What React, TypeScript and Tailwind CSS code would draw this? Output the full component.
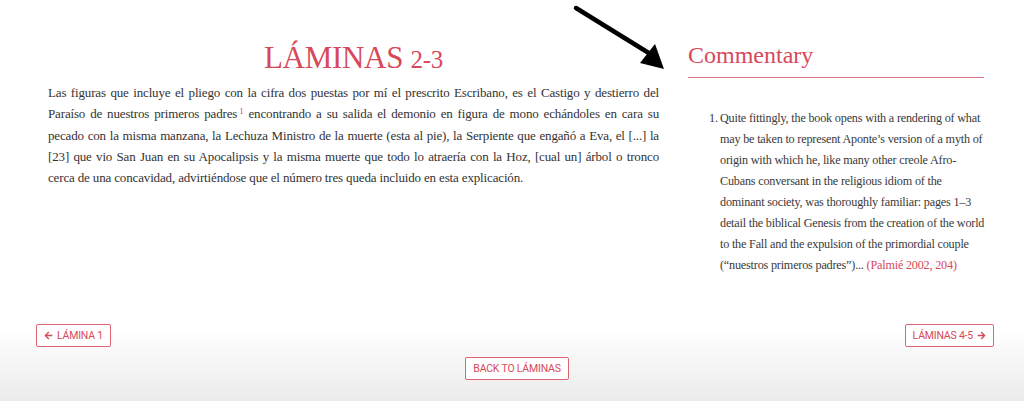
import { FaArrowLeft, FaArrowRight } from "react-icons/fa";

const MAIN_LINES = [
    "Las figuras que incluye el pliego con la cifra dos puestas por mí el prescrito Escribano, es el Castigo y destierro del",
    "Paraíso de nuestros primeros padres|1| encontrando a su salida el demonio en figura de mono echándoles en cara su",
    "pecado con la misma manzana, la Lechuza Ministro de la muerte (esta al pie), la Serpiente que engañó a Eva, el [...] la",
    "[23] que vio San Juan en su Apocalipsis y la misma muerte que todo lo atraería con la Hoz, [cual un] árbol o tronco",
];
const MAIN_LAST = "cerca de una concavidad, advirtiéndose que el número tres queda incluido en esta explicación.";

const NOTE_LINES = [
    "Quite fittingly, the book opens with a rendering of what",
    "may be taken to represent Aponte’s version of a myth of",
    "origin with which he, like many other creole Afro-",
    "Cubans conversant in the religious idiom of the",
    "dominant society, was thoroughly familiar: pages 1–3",
    "detail the biblical Genesis from the creation of the world",
    "to the Fall and the expulsion of the primordial couple",
];

const serif = "font-['Liberation_Serif','Times_New_Roman',serif]";
const btn =
    "flex items-center gap-1 h-[23px] px-[7px] border border-[#e06372] rounded-[2px] text-[#d8485b] text-[10.5px] uppercase font-['Liberation_Sans_Narrow','Roboto',sans-serif] tracking-[-0.2px] bg-white";

function MainLine({ text }: { text: string }) {
    const parts = text.split("|");
    return (
        <div className="text-justify [text-align-last:justify]">
            {parts.length === 1 ? (
                text
            ) : (
                <>
                    {parts[0]}
                    <sup className="text-[#d8485b] text-[9px] ml-[2px]">{parts[1]}</sup>
                    {parts[2]}
                </>
            )}
        </div>
    );
}

export default function App() {
    return (
        <div className={`relative w-[1024px] h-[401px] overflow-hidden bg-gradient-to-b from-white from-[82%] to-[#ebebeb] ${serif}`}>
            {/* pointer arrow */}
            <svg className="absolute left-[560px] top-0" width="120" height="80" viewBox="0 0 120 80">
                <line x1="16" y1="8" x2="92" y2="55" stroke="#000" strokeWidth="4.5" strokeLinecap="round" />
                <polygon points="104,69 80,63 95,44" fill="#000" />
            </svg>

            <div className="flex pl-[48px] pt-[38px]">
                {/* main */}
                <section className="w-[611px]">
                    <h1 className="text-center text-[#d8485b] text-[31px] leading-[40px] tracking-[-0.3px]">
                        LÁMINAS <span className="text-[25px]">2-3</span>
                    </h1>
                    <div className="mt-[2px] text-[#333] text-[13px] leading-[21.25px] tracking-[-0.15px]">
                        {MAIN_LINES.map(l => (
                            <MainLine key={l} text={l} />
                        ))}
                        <div>{MAIN_LAST}</div>
                    </div>
                </section>

                {/* commentary */}
                <aside className="ml-[29px] w-[296px]">
                    <h2 className="text-[#d8485b] text-[24px] leading-[30px] pt-[2px] pb-[7px] border-b border-[#e07583]">Commentary</h2>
                    <ol className="mt-[30px] pl-[32px] text-[#3a3a3a] text-[12.2px] leading-[21px] tracking-[-0.2px]">
                        <li className="relative">
                            <span className="absolute -left-[11px] top-0">1.</span>
                            {NOTE_LINES.map(l => (
                                <div key={l} className="whitespace-nowrap">{l}</div>
                            ))}
                            <div className="whitespace-nowrap">
                                (“nuestros primeros padres”)... <span className="text-[#d8485b]">(Palmié 2002, 204)</span>
                            </div>
                        </li>
                    </ol>
                </aside>
            </div>

            {/* navigation */}
            <div className="absolute left-0 right-0 top-[324px] px-[30px] pl-[36px]">
                <div className="flex justify-between">
                    <button className={btn}>
                        <FaArrowLeft className="w-[9px] h-[9px]" /> LÁMINA 1
                    </button>
                    <button className={btn}>
                        LÁMINAS 4-5 <FaArrowRight className="w-[9px] h-[9px]" />
                    </button>
                </div>
                <div className="flex justify-center mt-[10px] pl-[4px]">
                    <button className={btn}>BACK TO LÁMINAS</button>
                </div>
            </div>
        </div>
    );
}
